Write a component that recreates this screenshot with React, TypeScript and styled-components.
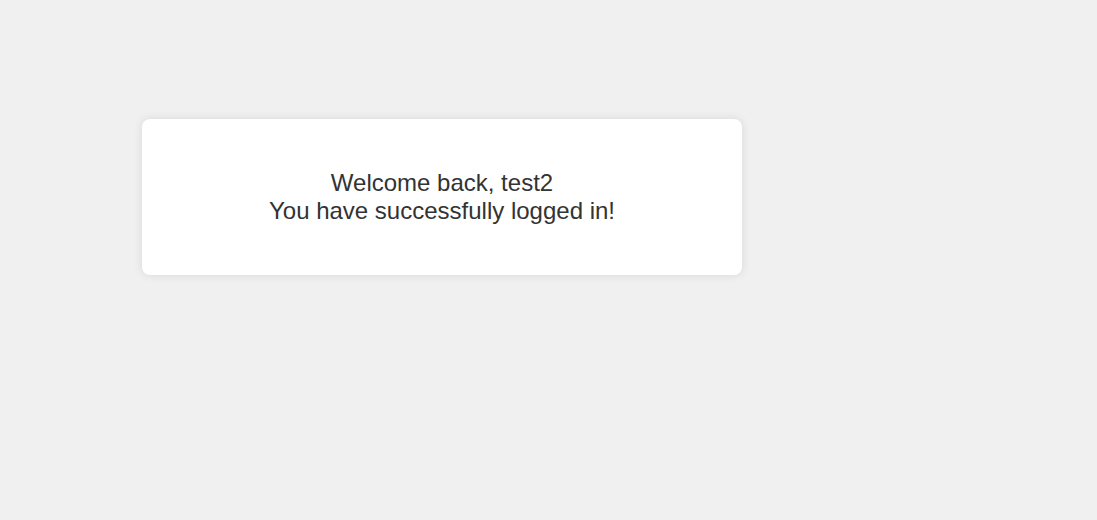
import React from "react";
import styled, { createGlobalStyle } from "styled-components";

const GlobalStyle = createGlobalStyle`
  html, body {
    margin: 0;
    padding: 0;
    background-color: #f0f0f0;
    font-family: "Liberation Sans", Arial, sans-serif;
  }
`;

const Page = styled.main`
  min-height: 520px;
  padding: 119px 0 0 142px;
  box-sizing: border-box;
`;

const Card = styled.section`
  width: 600px;
  height: 156px;
  box-sizing: border-box;
  background-color: #ffffff;
  border-radius: 8px;
  box-shadow: 0 0 10px rgba(0, 0, 0, 0.1);
  display: flex;
  flex-direction: column;
  align-items: center;
  justify-content: center;
  text-align: center;
  color: #333333;
  font-size: 24px;
  line-height: 1.15;
`;

const Line = styled.p`
  margin: 0;
`;

export default function App() {
  return (
    <>
      <GlobalStyle />
      <Page>
        <Card>
          <Line>Welcome back, test2</Line>
          <Line>You have successfully logged in!</Line>
        </Card>
      </Page>
    </>
  );
}
